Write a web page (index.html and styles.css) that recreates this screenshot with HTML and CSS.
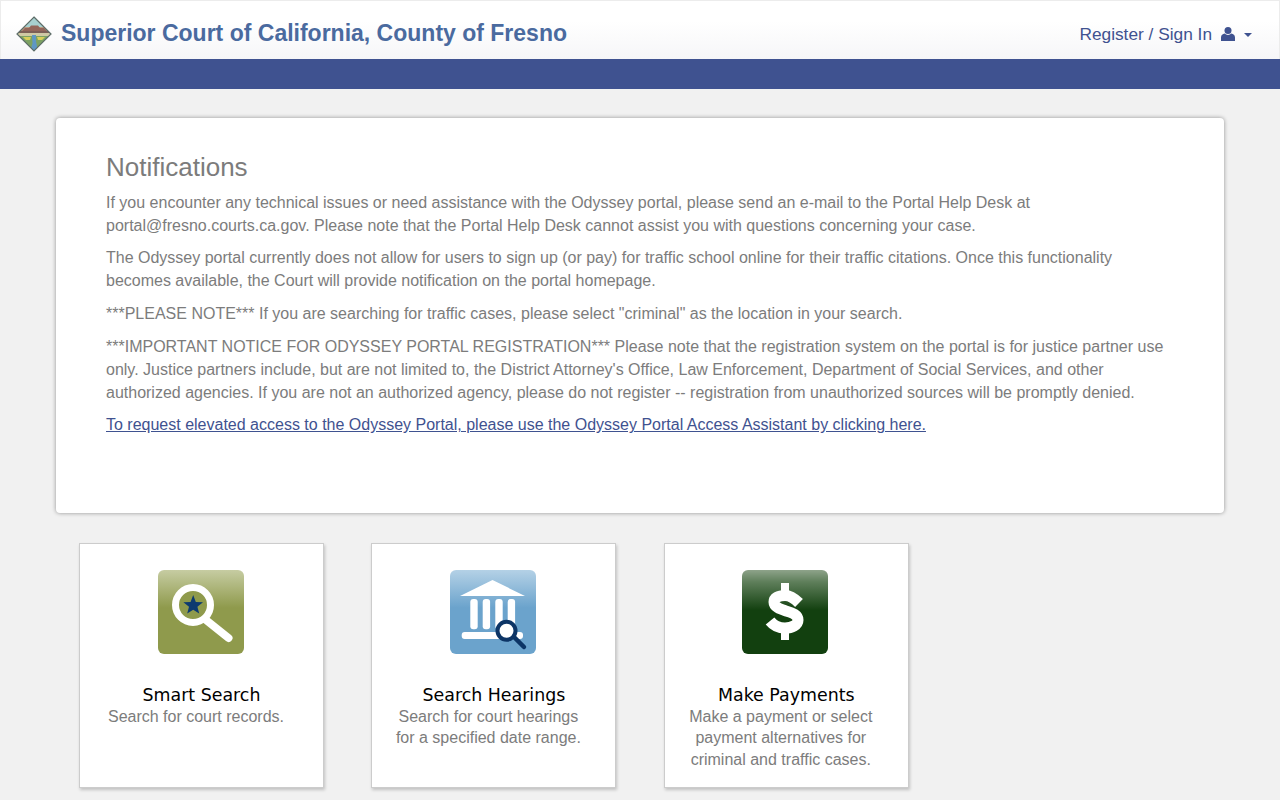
FILE: index.html
```html
<!DOCTYPE html>
<html lang="en">
<head>
<meta charset="utf-8">
<title>Superior Court of California, County of Fresno</title>
<link rel="stylesheet" href="styles.css">
</head>
<body>
<header class="topbar">
  <a class="brand" href="#">
    <svg class="logo" viewBox="0 0 36 36" aria-hidden="true">
      <defs><clipPath id="dia"><path d="M18 1 35 18 18 35 1 18Z"/></clipPath></defs>
      <g clip-path="url(#dia)">
        <rect width="36" height="11" fill="#a8d0cf"/>
        <rect y="11" width="36" height="6" fill="#b99a82"/>
        <path d="M6 15 9 12H13L15 9.500H22L24 12H28L31 15Z" fill="#94665a"/>
        <rect y="15" width="36" height="2" fill="#7d5f56"/>
        <rect y="17" width="36" height="3" fill="#cfc9a4"/>
        <rect y="20" width="36" height="16" fill="#7da262"/>
        <path d="M7 21H15L14 24H10ZM21 21H29L26 24H22Z" fill="#d9cf5a"/>
        <path d="M16 19H20L20 25 22 36H14L16.500 27Z" fill="#5f97c4"/>
      </g>
      <path d="M18 1 35 18 18 35 1 18Z" fill="none" stroke="#5d6d68" stroke-width="1.200"/>
    </svg>
    <span class="brand-name">Superior Court of California, County of Fresno</span>
  </a>
  <a class="account" href="#">
    <span>Register / Sign In</span>
    <svg class="user" viewBox="0 0 14 14" aria-hidden="true">
      <circle cx="7" cy="3.600" r="3.500" fill="#3f5290"/>
      <path d="M0 14V10.400C0 8.200 1.800 6.900 3.600 6.600 4.600 7.500 5.700 7.900 7 7.900S9.400 7.500 10.400 6.600C12.200 6.900 14 8.200 14 10.400V14Z" fill="#3f5290"/>
    </svg>
    <span class="caret"></span>
  </a>
</header>
<div class="band"></div>
<main class="content">
  <section class="panel">
    <h2 class="panel-title">Notifications</h2>
    <p>If you encounter any technical issues or need assistance with the Odyssey portal, please send an e-mail to the Portal Help Desk at portal@fresno.courts.ca.gov. Please note that the Portal Help Desk cannot assist you with questions concerning your case.</p>
    <p>The Odyssey portal currently does not allow for users to sign up (or pay) for traffic school online for their traffic citations. Once this functionality becomes available, the Court will provide notification on the portal homepage.</p>
    <p>***PLEASE NOTE*** If you are searching for traffic cases, please select "criminal" as the location in your search.</p>
    <p>***IMPORTANT NOTICE FOR ODYSSEY PORTAL REGISTRATION*** Please note that the registration system on the portal is for justice partner use only. Justice partners include, but are not limited to, the District Attorney's Office, Law Enforcement, Department of Social Services, and other authorized agencies. If you are not an authorized agency, please do not register -- registration from unauthorized sources will be promptly denied.</p>
    <p><a class="panel-link" href="#">To request elevated access to the Odyssey Portal, please use the Odyssey Portal Access Assistant by clicking here.</a></p>
  </section>
  <section class="cards">
    <a class="card" href="#">
      <svg class="tile" viewBox="0 0 86 84" aria-hidden="true">
        <defs><linearGradient id="g1" x1="0" y1="0" x2="0" y2="1"><stop offset="0" stop-color="#c6cca2"/><stop offset=".45" stop-color="#8f9a4c"/><stop offset="1" stop-color="#8f9a4c"/></linearGradient></defs>
        <rect width="86" height="84" rx="6" fill="url(#g1)"/>
        <path d="M48 50 70.500 68" stroke="#fff" stroke-width="8" stroke-linecap="round"/>
        <circle cx="35" cy="35" r="17.500" fill="#8f9a4c" stroke="#fff" stroke-width="7"/>
        <path d="M35.200 25 37.800 32 45 32.300 39.400 36.800 41.200 43.500 35.200 39.700 29.200 43.500 31 36.800 25.400 32.300 32.600 32Z" fill="#0d3a70"/>
      </svg>
      <h3 class="card-title">Smart Search</h3>
      <p class="card-text">Search for court records.</p>
    </a>
    <a class="card" href="#">
      <svg class="tile" viewBox="0 0 86 84" aria-hidden="true">
        <defs><linearGradient id="g2" x1="0" y1="0" x2="0" y2="1"><stop offset="0" stop-color="#b4d1e6"/><stop offset=".45" stop-color="#6ba3cc"/><stop offset="1" stop-color="#6ba3cc"/></linearGradient></defs>
        <rect width="86" height="84" rx="6" fill="url(#g2)"/>
        <path d="M42.500 10 75 26H10Z" fill="#fff"/>
        <rect x="20.300" y="29" width="7.400" height="30.300" rx="3" fill="#fff"/>
        <rect x="32.700" y="29" width="7.400" height="30.300" rx="3" fill="#fff"/>
        <rect x="45.300" y="29" width="7.400" height="30.300" rx="3" fill="#fff"/>
        <rect x="57.700" y="29" width="7.400" height="30.300" rx="3" fill="#fff"/>
        <rect x="11.700" y="62" width="61.300" height="7" rx="3" fill="#fff"/>
        <path d="M64 67 74 77" stroke="#0d3566" stroke-width="4.500" stroke-linecap="round"/>
        <circle cx="56.500" cy="60.700" r="9" fill="#fff" stroke="#0d3566" stroke-width="4"/>
      </svg>
      <h3 class="card-title">Search Hearings</h3>
      <p class="card-text">Search for court hearings<br>for a specified date range.</p>
    </a>
    <a class="card" href="#">
      <svg class="tile" viewBox="0 0 86 84" aria-hidden="true">
        <defs><linearGradient id="g3" x1="0" y1="0" x2="0" y2="1"><stop offset="0" stop-color="#8ea38a"/><stop offset=".14" stop-color="#5f7f5b"/><stop offset=".48" stop-color="#12400f"/><stop offset="1" stop-color="#12400f"/></linearGradient></defs>
        <rect width="86" height="84" rx="6" fill="url(#g3)"/>
        <rect x="39" y="13" width="8" height="10" fill="#fff"/>
        <rect x="39" y="60" width="8" height="10" fill="#fff"/>
        <path d="M57 33C52 28 48 25.500 43 25.500 36 25.500 32 28 32 32 32 37 38 39 44 41 51 43 56 45 56 50 56 55 50 58 43 58 37 58 32 56 28 51" fill="none" stroke="#fff" stroke-width="11"/>
      </svg>
      <h3 class="card-title">Make Payments</h3>
      <p class="card-text">Make a payment or select<br>payment alternatives for<br>criminal and traffic cases.</p>
    </a>
  </section>
</main>
</body>
</html>
```
FILE: styles.css
```css
* { box-sizing: border-box; }
html, body { margin: 0; height: 800px; overflow: hidden; }
body {
  background: #f1f1f1;
  font-family: "Liberation Sans", Arial, sans-serif;
  font-size: 16px;
  line-height: 22.857px;
  color: #7c7c7c;
}
a { text-decoration: none; }
.topbar {
  height: 59px;
  display: flex;
  align-items: center;
  justify-content: space-between;
  padding: 7px 27px 0 15px;
  background: linear-gradient(to bottom, #fff 0, #fff 35%, #f6f6f8 100%);
  border: 1px solid #ececec;
  border-bottom: 0;
}
.brand { display: flex; align-items: center; gap: 9px; }
.logo { width: 36px; height: 36px; display: block; }
.brand-name { font-size: 23px; font-weight: 700; color: #4a6a9f; }
.account { display: flex; align-items: center; color: #3f5290; font-size: 17.300px; margin-top: 2px; }
.user { width: 14px; height: 14px; margin-left: 9px; }
.caret {
  width: 0; height: 0; margin-left: 9px; margin-top: 2px;
  border-left: 4px solid transparent;
  border-right: 4px solid transparent;
  border-top: 4px solid #3f5290;
}
.band { height: 30px; background: #3f5290; }
.panel {
  margin: 29px 56px 0;
  height: 395px;
  padding: 31px 50px 0 50px;
  background: #fff;
  border-radius: 4px;
  box-shadow: 0 0 4px rgba(0,0,0,.4);
}
.panel-title { margin: 0 0 6.850px; font-size: 26px; font-weight: 400; line-height: 36px; color: #7c7c7c; }
.panel p { margin: 0 0 9.900px; }
.panel-link { color: #3f5290; text-decoration: underline; }
.cards {
  display: grid;
  grid-template-columns: repeat(3, 245px);
  column-gap: 47.400px;
  margin: 30px 0 0 79px;
}
.card {
  height: 245px;
  padding-top: 26px;
  display: flex;
  flex-direction: column;
  align-items: center;
  background: #fff;
  border: 1px solid #ccc;
  box-shadow: 1px 2px 3px rgba(0,0,0,.2);
}
.tile { width: 86px; height: 84px; display: block; margin-left: -2px; }
.card-title {
  margin: 31px 0 0;
  font-family: "DejaVu Sans", Verdana, sans-serif;
  font-size: 17.400px;
  font-weight: 400;
  line-height: 21px;
  color: #000;
}
.card-text { margin: 0; padding-right: 11px; text-align: center; color: #7c7c7c; line-height: 21.400px; }
```
